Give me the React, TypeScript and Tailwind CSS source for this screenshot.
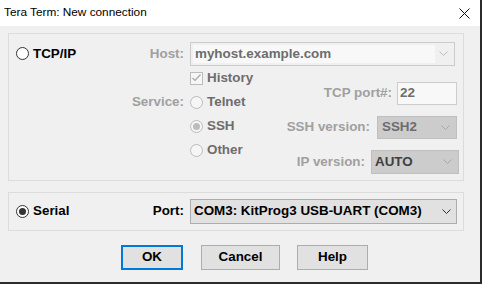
import React from "react";

const font = { fontFamily: '"Liberation Sans", Arial, sans-serif' };

function Chevron({ color }: { color: string }) {
  return (
    <svg width="9" height="6" viewBox="0 0 9 6" className="shrink-0">
      <path d="M0.5 0.5 L4.5 4.5 L8.5 0.5" fill="none" stroke={color} strokeWidth="1" />
    </svg>
  );
}

function Radio({ checked, disabled }: { checked?: boolean; disabled?: boolean }) {
  return (
    <span
      className={
        "flex h-[13px] w-[13px] shrink-0 items-center justify-center rounded-full border " +
        (disabled ? "border-[#bcbcbc] bg-[#f6f6f6]" : "border-[#333333] bg-white")
      }
    >
      {checked && (
        <span className={"h-[7px] w-[7px] rounded-full " + (disabled ? "bg-[#bcbcbc]" : "bg-[#333333]")} />
      )}
    </span>
  );
}

export default function App() {
  return (
    <div className="h-[284px] w-[482px] bg-[#2b2b2b]" style={font}>
      <div className="flex h-[282px] w-[480px] flex-col bg-[#f0f0f0] text-[13.4px] font-bold">
        {/* title bar */}
        <div className="flex h-[26px] items-center justify-between bg-white pl-[4px] pr-[10px] text-[11.8px] font-normal text-black">
          <span>Tera Term: New connection</span>
          <svg width="11" height="11" viewBox="0 0 11 11">
            <path d="M0.5 0.5 L10.5 10.5 M10.5 0.5 L0.5 10.5" stroke="#111" strokeWidth="1" />
          </svg>
        </div>

        <div className="flex flex-col pl-[8px] pt-[7px]">
          {/* TCP/IP group */}
          <div className="h-[148px] w-[456px] border border-[#dcdcdc] pt-[8px]">
            <div className="flex h-[24px] items-center">
              <div className="flex w-[175px] items-center justify-between pl-[7px]">
                <div className="flex items-center gap-[4px] text-black">
                  <Radio />
                  <span>TCP/IP</span>
                </div>
                <span className="text-[#a0a0a0]">Host:</span>
              </div>
              <div className="ml-[6px] flex h-[24px] w-[265px] items-center border border-[#cccccc] bg-[#f0f0f0] p-[2px]">
                <div className="flex h-full flex-1 items-center bg-[#f8f8f8] pl-[2px] text-[#6d6d6d]">
                  myhost.example.com
                </div>
                <div className="flex w-[17px] justify-center">
                  <Chevron color="#bcbcbc" />
                </div>
              </div>
            </div>

            <div className="flex">
              <div className="flex w-[175px] flex-col items-end text-[#a0a0a0]">
                <div className="h-[24px]" />
                <div className="flex h-[24px] items-center">Service:</div>
              </div>
              <div className="ml-[6px] flex w-[92px] flex-col text-[#6d6d6d]">
                <div className="flex h-[24px] items-center gap-[4px]">
                  <span className="flex h-[13px] w-[13px] items-center justify-center border border-[#bcbcbc] bg-[#f6f6f6]">
                    <svg width="9" height="8" viewBox="0 0 9 8">
                      <path d="M0.5 4 L3 6.5 L8.5 0.5" fill="none" stroke="#a8a8a8" strokeWidth="1.2" />
                    </svg>
                  </span>
                  <span>History</span>
                </div>
                <div className="flex h-[24px] items-center gap-[4px]">
                  <Radio disabled />
                  <span>Telnet</span>
                </div>
                <div className="flex h-[24px] items-center gap-[4px]">
                  <Radio disabled checked />
                  <span>SSH</span>
                </div>
                <div className="flex h-[24px] items-center gap-[4px]">
                  <Radio disabled />
                  <span>Other</span>
                </div>
              </div>
              <div className="flex flex-1 flex-col items-end pt-[16px] text-[#a0a0a0]">
                <div className="mr-[6px] flex h-[23px] items-center gap-[5px]">
                  <span>TCP port#:</span>
                  <div className="flex h-[23px] w-[60px] items-center border border-[#cccccc] bg-[#f8f8f8] pl-[2px] text-[#6d6d6d]">
                    22
                  </div>
                </div>
                <div className="mr-[6px] mt-[11px] flex h-[23px] items-center gap-[7px]">
                  <span>SSH version:</span>
                  <div className="flex h-[23px] w-[80px] items-center justify-between border border-[#bfbfbf] bg-[#cccccc] pl-[4px] pr-[6px] text-[#6d6d6d]">
                    <span>SSH2</span>
                    <Chevron color="#a8a8a8" />
                  </div>
                </div>
                <div className="mr-[4px] mt-[11px] flex h-[24px] items-center gap-[6px]">
                  <span>IP version:</span>
                  <div className="flex h-[24px] w-[88px] items-center justify-between border border-[#bfbfbf] bg-[#cccccc] pl-[3px] pr-[6px] text-[#404040]">
                    <span>AUTO</span>
                    <Chevron color="#a8a8a8" />
                  </div>
                </div>
              </div>
            </div>
          </div>

          {/* Serial group */}
          <div className="mt-[11px] flex h-[39px] w-[456px] items-center border border-[#dcdcdc] text-black">
            <div className="flex w-[175px] items-center justify-between pl-[7px]">
              <div className="flex items-center gap-[4px]">
                <Radio checked />
                <span>Serial</span>
              </div>
              <span>Port:</span>
            </div>
            <div className="ml-[6px] flex h-[25px] w-[267px] items-center justify-between border border-[#adadad] bg-[#e1e1e1] pl-[3px] pr-[5px]">
              <span>COM3: KitProg3 USB-UART (COM3)</span>
              <Chevron color="#333333" />
            </div>
          </div>

          {/* buttons */}
          <div className="mt-[14px] flex pl-[113px] text-black">
            <button className="flex h-[25px] w-[62px] items-center justify-center border-2 border-[#0078d7] bg-[#e1e1e1]">
              OK
            </button>
            <button className="ml-[18px] flex h-[25px] w-[79px] items-center justify-center border border-[#adadad] bg-[#e1e1e1]">
              Cancel
            </button>
            <button className="ml-[17px] flex h-[25px] w-[71px] items-center justify-center border border-[#adadad] bg-[#e1e1e1]">
              Help
            </button>
          </div>
        </div>
      </div>
    </div>
  );
}
